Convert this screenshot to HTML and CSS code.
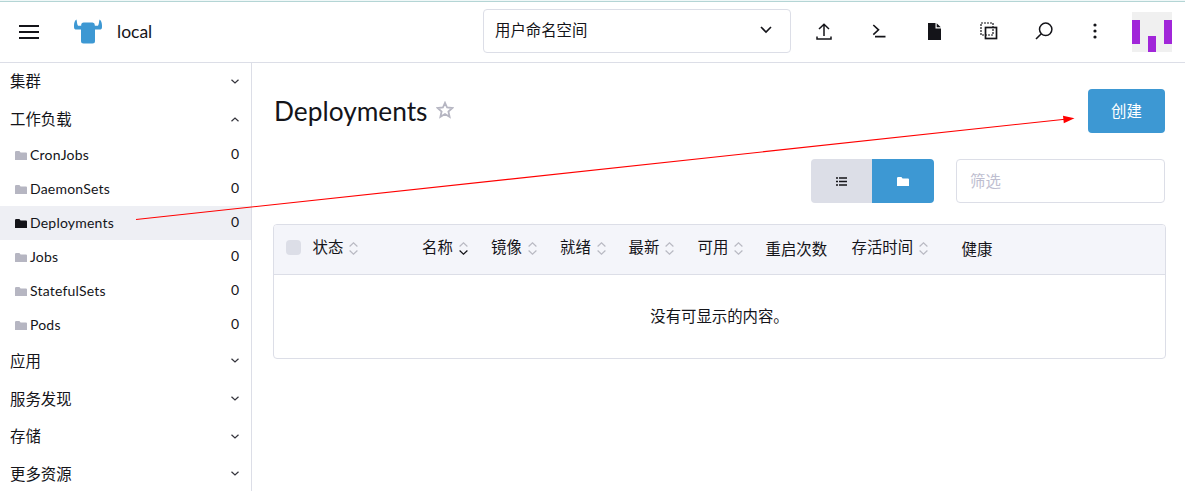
FILE: index.html
```html
<!DOCTYPE html>
<html lang="zh-CN">
<head>
<meta charset="utf-8">
<title>Deployments</title>
<link rel="stylesheet" href="styles.css">
</head>
<body>
<svg class="defs" aria-hidden="true">
  <symbol id="folder" viewBox="0 0 12 9"><path d="M0 1.200Q0 0 1.200 0H4.400L5.600 1.500H11Q12 1.500 12 2.500V9H0Z" fill="currentColor"/></symbol>
  <symbol id="chev" viewBox="0 0 8 5"><path d="M.5.7 4 4 7.500.7" fill="none" stroke="currentColor" stroke-width="1.200"/></symbol>
  <symbol id="sort-up" viewBox="0 0 9 5"><path d="M.6 4.500 4.500.8 8.400 4.500" fill="none" stroke="currentColor" stroke-width="1.200"/></symbol>
  <symbol id="sort-down" viewBox="0 0 9 5"><path d="M.6.5 4.500 4.200 8.400.5" fill="none" stroke="currentColor" stroke-width="1.200"/></symbol>
</svg>
<div class="app">
  <header class="header">
    <button class="menu" aria-label="menu"><svg width="20" height="14" viewBox="0 0 20 14"><path d="M0 1H20M0 7H20M0 13H20" stroke="#141419" stroke-width="2"/></svg></button>
    <svg class="logo" width="28" height="25" viewBox="0 0 28 25"><path d="M2.400.5C3.200 2.500 2.800 5 4 6.800H7.200V6Q7.200 3.500 9.700 3.500H18.500Q20.800 3.500 20.800 6V6.800H24C25.200 5 24.800 2.500 25.600.5C27.300 1.500 28 4 28 6.500V8Q28 10.600 25.500 10.600H21V22Q21 24.500 18.500 24.500H9.500Q7 24.500 7 22V10.600H2.500Q0 10.600 0 8V6.500C0 4 .7 1.500 2.400.5Z" fill="#3d98d3"/></svg>
    <span class="cluster">local</span>
    <div class="namespace"><span>用户命名空间</span><svg width="12" height="8" viewBox="0 0 12 8"><path d="M1 1 6 6 11 1" fill="none" stroke="#141419" stroke-width="1.600"/></svg></div>
    <nav class="tools">
      <span class="tool"><svg width="16" height="17" viewBox="0 0 16 17"><path d="M8 13V1.500M3 6 8 1.200 13 6M1 13.500V16H15V13.500" fill="none" stroke="#141419" stroke-width="1.500"/></svg></span>
      <span class="tool"><svg width="14" height="14" viewBox="0 0 14 14"><path d="M1.300 1 6.500 5.800 1.300 10.600M3 12.600H13.500" fill="none" stroke="#141419" stroke-width="1.600"/></svg></span>
      <span class="tool"><svg width="13" height="17" viewBox="0 0 13 17"><path d="M0 0H7.500V5.500H13V17H0ZM8.700.2 12.800 4.300H8.700Z" fill="#141419"/></svg></span>
      <span class="tool"><svg width="18" height="18" viewBox="0 0 18 18"><rect x="1" y="1" width="12" height="12" fill="none" stroke="#141419" stroke-width="1.200" stroke-dasharray="2 1"/><rect x="5.500" y="5.500" width="11" height="11" fill="none" stroke="#141419" stroke-width="1.700"/></svg></span>
      <span class="tool"><svg width="18" height="18" viewBox="0 0 18 18"><circle cx="10.700" cy="7.300" r="6.200" fill="none" stroke="#141419" stroke-width="1.500"/><path d="M6.300 11.700 1 17" stroke="#141419" stroke-width="1.600"/></svg></span>
      <span class="tool dots"><svg width="4" height="16" viewBox="0 0 4 16"><g fill="#141419"><circle cx="2" cy="2" r="1.600"/><circle cx="2" cy="8" r="1.600"/><circle cx="2" cy="14" r="1.600"/></g></svg></span>
    </nav>
    <svg class="avatar" width="40" height="40" viewBox="0 0 40 40"><path d="M0 0H40V40H0Z" fill="#f0f0f0"/><path d="M0 8H8V32H0ZM32 8H40V32H32ZM16 24H24V40H16Z" fill="#a126d9"/></svg>
  </header>
  <aside class="sidebar">
    <div class="group"><span>集群</span><svg class="chev"><use href="#chev"/></svg></div>
    <div class="group"><span>工作负载</span><svg class="chev open"><use href="#chev"/></svg></div>
    <div class="item"><svg class="folder"><use href="#folder"/></svg><span>CronJobs</span><span class="count">0</span></div>
    <div class="item"><svg class="folder"><use href="#folder"/></svg><span>DaemonSets</span><span class="count">0</span></div>
    <div class="item active"><svg class="folder"><use href="#folder"/></svg><span>Deployments</span><span class="count">0</span></div>
    <div class="item"><svg class="folder"><use href="#folder"/></svg><span>Jobs</span><span class="count">0</span></div>
    <div class="item"><svg class="folder"><use href="#folder"/></svg><span>StatefulSets</span><span class="count">0</span></div>
    <div class="item"><svg class="folder"><use href="#folder"/></svg><span>Pods</span><span class="count">0</span></div>
    <div class="group"><span>应用</span><svg class="chev"><use href="#chev"/></svg></div>
    <div class="group"><span>服务发现</span><svg class="chev"><use href="#chev"/></svg></div>
    <div class="group"><span>存储</span><svg class="chev"><use href="#chev"/></svg></div>
    <div class="group"><span>更多资源</span><svg class="chev"><use href="#chev"/></svg></div>
  </aside>
  <main class="main">
    <div class="title-row">
      <h1>Deployments</h1>
      <svg class="star" width="18" height="18" viewBox="0 0 18 18"><path d="M9 1.800 11.100 6.500 16.400 7 12.400 10.500 13.600 15.800 9 13 4.400 15.800 5.600 10.500 1.600 7 6.900 6.500Z" fill="none" stroke="#b6b6c2" stroke-width="1.800"/></svg>
      <button class="create">创建</button>
    </div>
    <div class="filters">
      <div class="toggle">
        <span class="flat"><svg width="11" height="9" viewBox="0 0 11 9"><path d="M0 1H2M0 4.500H2M0 8H2M3 1H11M3 4.500H11M3 8H11" stroke="#141419" stroke-width="1.300"/></svg></span>
        <span class="grouped"><svg class="folder"><use href="#folder"/></svg></span>
      </div>
      <input class="search" placeholder="筛选">
    </div>
    <div class="table">
      <div class="thead">
        <span class="check"></span>
        <span class="th">状态<i class="sort"><svg><use href="#sort-up"/></svg><svg><use href="#sort-down"/></svg></i></span>
        <span class="th">名称<i class="sort"><svg><use href="#sort-up"/></svg><svg class="on"><use href="#sort-down"/></svg></i></span>
        <span class="th">镜像<i class="sort"><svg><use href="#sort-up"/></svg><svg><use href="#sort-down"/></svg></i></span>
        <span class="th">就绪<i class="sort"><svg><use href="#sort-up"/></svg><svg><use href="#sort-down"/></svg></i></span>
        <span class="th">最新<i class="sort"><svg><use href="#sort-up"/></svg><svg><use href="#sort-down"/></svg></i></span>
        <span class="th">可用<i class="sort"><svg><use href="#sort-up"/></svg><svg><use href="#sort-down"/></svg></i></span>
        <span class="th plain">重启次数</span>
        <span class="th">存活时间<i class="sort"><svg><use href="#sort-up"/></svg><svg><use href="#sort-down"/></svg></i></span>
        <span class="th plain">健康</span>
      </div>
      <div class="empty">没有可显示的内容。</div>
    </div>
  </main>
  <svg class="arrow" width="1185" height="491" viewBox="0 0 1185 491"><path d="M136 219.500 1065 119.200" stroke="#f00" stroke-width="1.100"/><path d="M1074.500 118.200 1063.800 123.300 1063 115.800Z" fill="#f00"/></svg>
</div>
</body>
</html>
```
FILE: styles.css
```css
* { box-sizing: border-box; }
body {
  margin: 0;
  background: #fff;
  color: #141419;
  font: 14px/20px Lato, "Noto Sans CJK SC", sans-serif;
}
svg { display: block; flex: none; }
.defs { display: none; }
button { border: 0; background: none; padding: 0; font: inherit; }
.app {
  position: relative;
  display: grid;
  grid-template: 63px 428px / 252px 1fr;
  width: 1185px;
  height: 491px;
  overflow: hidden;
}
.header {
  grid-column: 1 / 3;
  display: flex;
  align-items: center;
  border-bottom: 1px solid #dcdee7;
  padding: 0 13px 0 19px;
  background: linear-gradient(#f0f8f8 1px, #b4d5d5 1px, #b4d5d5 2px, #fff 2px);
}
.menu { margin-top: 2px; }
.logo { margin-left: 35px; margin-top: 1px; }
.cluster { margin-left: 15px; width: 366px; font-size: 17.500px; margin-top: 1px; }
.namespace {
  display: flex;
  align-items: center;
  justify-content: space-between;
  width: 308px;
  height: 44px;
  padding: 0 18px 2px 11px;
  border: 1px solid #dcdee7;
  border-radius: 4px;
  font-size: 15.400px;
}
.tools { display: flex; margin-left: 5.500px; }
.tool { display: flex; width: 55px; height: 20px; align-items: center; justify-content: center; }
.tool.dots { width: 46px; }
.avatar { margin-left: auto; margin-top: 2px; }
.sidebar { border-right: 1px solid #dcdee7; overflow: hidden; }
.group, .item { display: flex; align-items: center; }
.group { height: 37.600px; padding: 0 12px 0 10px; justify-content: space-between; font-size: 15.400px; }
.group:first-child span { margin-top: -1px; }
.chev { width: 8px; height: 5px; color: #33333b; }
.chev.open { transform: rotate(180deg); }
.item { height: 34px; padding: 0 12px 0 15px; gap: 3px; letter-spacing: .2px; }
.item .folder { color: #b6b6c2; }
.item.active { background: #eeeff4; }
.item.active .folder { color: #141419; }
.folder { width: 12px; height: 9px; }
.count { margin-left: auto; margin-top: -2px; letter-spacing: 0; }
.main { padding: 26px 19px 0 21px; }
.title-row { display: flex; align-items: center; height: 44px; padding-left: 1px; }
h1 { margin: 0; font-size: 26.300px; font-weight: 400; line-height: 32px; }
.star { margin: -2px 0 0 8px; }
.create {
  margin-left: auto;
  margin-right: 1px;
  width: 77px;
  height: 44px;
  border-radius: 4px;
  background: #3d98d3;
  color: #fff;
  font-size: 15.400px;
}
.filters { display: flex; justify-content: flex-end; gap: 22px; margin: 26px 1px 0 0; }
.toggle { display: flex; height: 44px; border-radius: 4px; overflow: hidden; color: #fff; }
.toggle span { display: flex; align-items: center; justify-content: center; }
.flat { width: 61px; background: #dcdee7; }
.grouped { width: 62px; background: #3d98d3; }
.search {
  width: 209px;
  height: 44px;
  padding: 0 13px;
  border: 1px solid #dcdee7;
  border-radius: 4px;
  font: inherit;
  font-size: 15.400px;
}
.search::placeholder { color: #bebed0; opacity: 1; }
.table { margin-top: 21px; height: 135px; border: 1px solid #dcdee7; border-radius: 4px; overflow: hidden; }
.thead {
  display: grid;
  grid-template-columns: 26.500px 109.500px 69px 69px 68.500px 69px 68px 86px 110px 1fr;
  align-items: center;
  height: 50px;
  padding: 0 0 5px 12px;
  background: #f4f5fa;
  border-bottom: 1px solid #dcdee7;
  font-size: 15.400px;
}
.check { width: 15px; height: 15px; border-radius: 4px; background: #dcdee7; }
.th { display: flex; align-items: center; white-space: nowrap; }
.th.plain { padding-top: 3px; }
.sort { display: grid; gap: 3px; margin: 2px 0 0 6px; color: #b9bac3; }
.sort svg { width: 9px; height: 5px; }
.sort .on { color: #141419; }
.empty { display: flex; height: 83px; padding-bottom: 2px; align-items: center; justify-content: center; font-size: 15.400px; }
.arrow { position: absolute; inset: 0; pointer-events: none; }
```
